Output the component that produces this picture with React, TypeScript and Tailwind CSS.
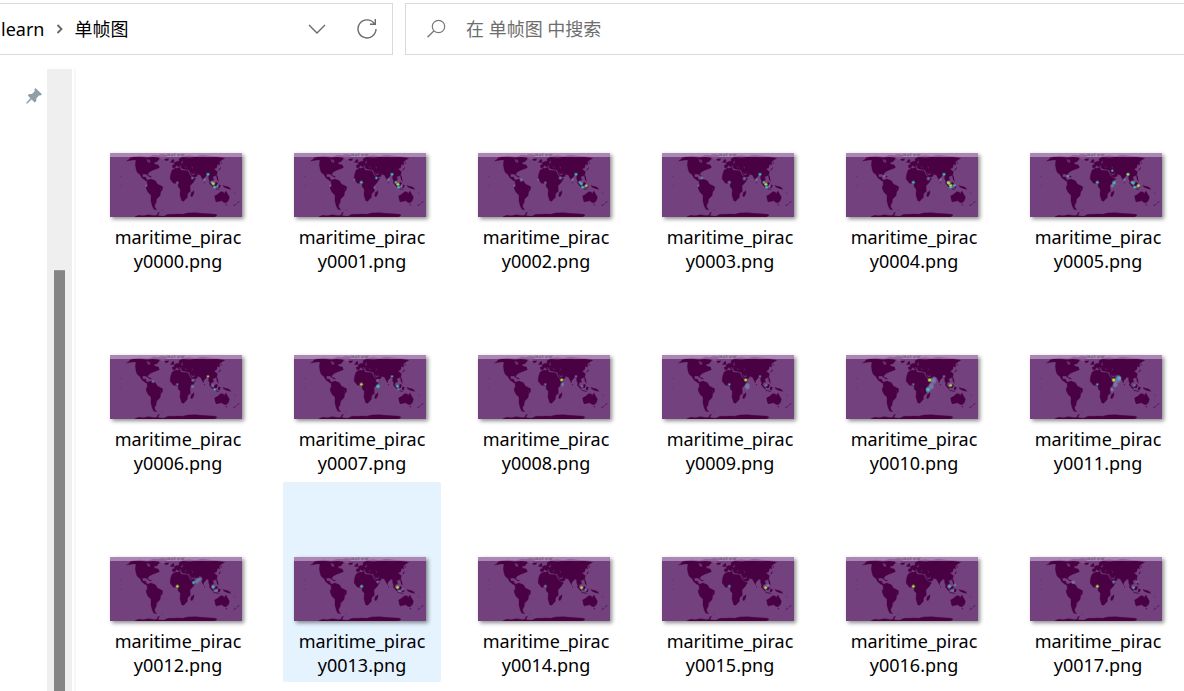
type Spot = [x: number, y: number, r: number, level: 0 | 1 | 2];

const SPOT_FILL = ["fill-[#6f92ba]", "fill-[#3fc0b0]", "fill-[#a8ec40]"] as const;

const asia: Spot[] = [
  [324, 88, 4, 1],
  [313, 104, 3, 0],
  [344, 127, 4, 1],
  [353, 123, 3, 0],
  [335, 112, 3, 1],
];

const frames: Spot[][] = [
  [...asia, [340, 116, 4, 2], [232, 113, 3, 0], [277, 99, 3, 0], [139, 122, 2, 0]],
  [...asia, [342, 118, 4, 2], [232, 112, 4, 1], [277, 99, 3, 1], [139, 122, 2, 0], [211, 104, 2, 0], [271, 128, 2, 0]],
  [...asia, [356, 122, 3, 2], [340, 116, 4, 1], [232, 113, 3, 0], [277, 99, 4, 0], [139, 122, 2, 0], [160, 105, 4, 0], [211, 104, 2, 0]],
  [...asia, [342, 118, 4, 2], [232, 112, 4, 0], [277, 101, 4, 0], [150, 98, 4, 0], [139, 122, 2, 0]],
  [...asia, [338, 114, 4, 2], [344, 121, 4, 2], [357, 121, 3, 1], [232, 112, 4, 1], [277, 101, 4, 0], [145, 93, 3, 0]],
  [...asia, [324, 88, 3, 2], [340, 114, 4, 1], [356, 122, 4, 2], [232, 112, 4, 1], [282, 113, 5, 1], [277, 77, 3, 1], [277, 122, 4, 0], [144, 93, 3, 1]],
  [[324, 88, 3, 2], [344, 128, 3, 1], [338, 116, 3, 0], [232, 112, 3, 0], [279, 100, 4, 0], [277, 118, 4, 0], [159, 104, 3, 0]],
  [[232, 112, 4, 2], [282, 118, 5, 1], [281, 101, 4, 0], [324, 88, 3, 1], [341, 118, 4, 1], [343, 128, 3, 0]],
  [[283, 112, 7, 0], [281, 99, 4, 2], [232, 112, 3, 0], [324, 88, 3, 0], [343, 118, 3, 0]],
  [[286, 118, 10, 0], [281, 99, 4, 2], [232, 112, 3, 1], [324, 88, 3, 0], [343, 115, 3, 0]],
  [[293, 100, 11, 0], [286, 118, 10, 0], [276, 128, 6, 1], [281, 99, 5, 2], [232, 112, 3, 0], [324, 88, 3, 0], [344, 115, 4, 2]],
  [[294, 95, 12, 0], [286, 112, 10, 0], [298, 93, 5, 1], [281, 99, 5, 2], [276, 128, 4, 0], [232, 112, 3, 1], [344, 115, 3, 0]],
  [[232, 112, 4, 2], [290, 95, 9, 0], [300, 90, 6, 0], [281, 101, 4, 1], [340, 114, 4, 1], [348, 124, 4, 0]],
  [[233, 112, 4, 1], [281, 99, 3, 0], [341, 115, 4, 2], [347, 126, 3, 0], [357, 121, 3, 0]],
  [[341, 116, 4, 2], [232, 112, 4, 0], [354, 122, 3, 0]],
  [[232, 112, 4, 0], [341, 116, 4, 2], [348, 110, 4, 0]],
  [[232, 112, 4, 2], [341, 112, 4, 1], [349, 124, 4, 0], [357, 108, 3, 0]],
  [[232, 112, 4, 2], [281, 99, 4, 0], [341, 116, 3, 1], [160, 100, 4, 0], [352, 98, 3, 0]],
];

function WorldMap({ spots }: { spots: Spot[] }) {
  return (
    <svg viewBox="30 24 396 192" className="block h-16 w-[132px]" aria-hidden="true">
      <rect x="30" y="24" width="396" height="192" className="fill-[#74417f]" />
      <g className="fill-[#490143] stroke-[#490143]" strokeWidth="1" strokeLinejoin="round">
        <path d="M90 39 100 36 121 35 139 38 160 36 178 39 176 45 168 52 162 50 164 58 175 60 178 68 166 73 158 76 149 80 143 87 145 92 137 87 127 87 129 97 137 96 138 101 145 107 138 108 126 99 118 86 114 80 117 87 111 81 108 71 106 58 108 45 98 45 80 48 88 43Z" />
        <path d="M146 104 153 102 166 107 172 117 188 125 187 135 182 141 180 152 170 162 168 174 164 180 165 189 171 194 162 193 157 184 153 169 153 151 144 142 138 128 142 119 141 109Z" />
        <path d="M216 76 225 70 240 69 244 76 264 77 270 90 279 100 287 100 280 112 270 123 271 139 263 146 262 157 251 169 245 167 240 150 241 133 235 126 234 116 220 115 210 102 211 90Z" />
        <path d="M282 137 281 147 276 155 272 153 274 143Z" />
        <path d="M218 68 217 61 224 58 222 53 229 50 238 48 237 41 248 36 270 38 296 34 320 37 350 36 374 40 365 45 358 51 359 60 352 58 350 68 342 72 352 80 350 91 338 95 341 105 334 107 332 115 326 101 326 92 321 90 311 101 310 108 304 96 301 90 292 88 291 94 278 98 270 84 268 76 255 73 247 72 241 61 237 61 242 69 235 65 230 61 225 68Z" />
        <path d="M215 46 221 43 222 51 217 54ZM211 51 215 49 214 54ZM194 43 206 41 204 46 197 47Z" />
        <path d="M344 153 354 147 362 140 370 141 372 146 378 138 383 148 388 156 386 166 378 174 370 171 365 167 349 171 346 165Z" />
        <path d="M104 216 115 211 130 212 145 209 164 212 173 209 173 204 178 201 174 212 191 214 204 208 219 208 233 207 248 208 263 204 287 203 304 205 325 206 347 208 351 211 344 216Z" />
      </g>
      <g className="fill-[#490143]">
        <path d="M327 109 341 123 340 128 328 115ZM341 117 349 111 354 115 349 124 342 122ZM341 129 357 132 356 134 341 131ZM355 119 362 120 359 130 354 128ZM368 121 387 126 394 134 382 131 378 130 371 126ZM348 89 353 94 356 110 351 104Z" />
        <path d="M376 178 382 178 379 182ZM414 167 418 171 412 175 410 174 415 171ZM411 176 402 183 399 182 407 177Z" opacity="0.8" />
        <path d="M142 91 150 92 156 96 150 97ZM353 77 358 71 362 65 361 73ZM363 49 366 57 362 54ZM313 111h2v4h-2z" />
        <path d="M394 127h4v2h-4zM403 141l5 4-2 1-5-4zM60 92l6 3-1 2-5-3zM62 119h3v3h-3zM40 144h2v2h-2zM135 120h2v2h-2zM184 195h5v2h-5zM295 188h3v2h-3z" opacity="0.35" />
      </g>
      <path
        d="M139 42 151 45 150 55 142 51ZM247 46 243 53 245 57 249 52ZM253 65 262 65 262 67 253 67ZM275 64 278 66 278 71 276 70ZM272 81 280 88 285 85 280 79 286 84 283 90 277 91Z"
        className="fill-[#74417f]"
        opacity="0.7"
      />
      <path d="M166 29 185 26 205 29 195 38 188 45 181 39Z" className="fill-[#815084]" />
      <path d="M262 75 280 99M211 86 210 104 220 116 233 116M302 94 310 110 322 94M180 128 185 142M336 104 341 124" className="fill-none stroke-[#8a62a0]" strokeWidth="1" opacity="0.4" />
      <rect x="30" y="24" width="396" height="12" className="fill-[#aa88b3]" />
      <path d="M88 36 120 32 145 35 160 29 176 31 184 27 204 30 198 36ZM240 36 266 31 286 34 306 29 342 34 374 36Z" className="fill-[#94689a]" />
      <path d="M202 26h9v7h-9zM213 28h6v6h-6zM221 25h5v8h-5zM232 27h7v7h-7zM242 26h11v7h-11z" className="fill-[#7f6585]" opacity="0.8" />
      {spots.map(([x, y, r, level], i) =>
        r > 6 ? (
          <g key={i} className="fill-[#7a8fc0]">
            <ellipse cx={x} cy={y} rx={r * 0.8} ry={r} opacity="0.4" />
            <ellipse cx={x} cy={y} rx={r * 0.5} ry={r * 0.7} opacity="0.5" />
          </g>
        ) : (
          <g key={i} className={SPOT_FILL[level]}>
            <circle cx={x} cy={y} r={r + 2} opacity="0.3" />
            <circle cx={x} cy={y} r={r * 0.9} opacity={level === 0 ? 0.65 : 0.95} />
          </g>
        ),
      )}
    </svg>
  );
}

function FileTile({ index, spots }: { index: number; spots: Spot[] }) {
  const selected = index === 13;
  return (
    <li>
      <button
        type="button"
        aria-pressed={selected}
        className={`flex h-[200px] w-full flex-col items-center rounded-xs pt-[75px] ${selected ? "bg-[#e5f3ff]" : "bg-white"}`}
      >
        <span className="mr-1 shadow-[2px_2px_4px_rgba(0,0,0,0.45)]">
          <WorldMap spots={spots} />
        </span>
        <span className="mt-2 w-[134px] text-center text-lg leading-6 break-all">
          {`maritime_piracy${String(index).padStart(4, "0")}.png`}
        </span>
      </button>
    </li>
  );
}

export default function App() {
  return (
    <div className="flex min-h-screen flex-col bg-white font-['Noto_Sans','Noto_Sans_CJK_SC',sans-serif] text-lg text-black">
      <header className="flex gap-3 pt-[3px]">
        <div className="flex h-13 w-[393px] shrink-0 items-center border-y border-r border-[#d9d9d9] pr-[13px]">
          <nav aria-label="路径" className="flex flex-1 items-center">
            <a href="#learn" className="pl-px">learn</a>
            <svg viewBox="0 0 8 10" className="mr-2.5 ml-3 h-2.5 w-2" aria-hidden="true">
              <path d="M1.5 1 5.5 5 1.5 9" className="fill-none stroke-[#666]" strokeWidth="1.8" />
            </svg>
            <a href="#frames">单帧图</a>
          </nav>
          <button type="button" aria-label="以前的位置" className="mr-6 flex size-7 items-center justify-center">
            <svg viewBox="0 0 18 10" className="h-2.5 w-[18px]">
              <path d="M1 1 9 9 17 1" className="fill-none stroke-[#6b6b6b]" strokeWidth="1.4" />
            </svg>
          </button>
          <button type="button" aria-label="刷新" className="flex size-6 items-center justify-center">
            <svg viewBox="0 0 20 20" className="size-5">
              <path d="M17.2 4.5A9 9 0 1 0 19 10M18.3 0V5.2H13" className="fill-none stroke-[#6b6b6b]" strokeWidth="1.4" />
            </svg>
          </button>
        </div>
        <label className="flex h-13 flex-1 items-center border-y border-l border-[#d9d9d9] pl-5">
          <svg viewBox="0 0 20 20" className="size-5 shrink-0" aria-hidden="true">
            <path d="M7.8 12 1.5 18.3" className="stroke-[#777]" strokeWidth="1.4" />
            <circle cx="12.5" cy="7.5" r="6.2" className="fill-none stroke-[#777]" strokeWidth="1.2" />
          </svg>
          <input
            type="text"
            aria-label="搜索"
            placeholder="在 单帧图 中搜索"
            className="ml-5 min-w-0 flex-1 outline-none placeholder:text-[#6d6d6d]"
          />
        </label>
      </header>

      <div className="flex flex-1 pt-3.5">
        <aside className="flex w-[47px] shrink-0 justify-end pt-[19px] pr-[5px]">
          <svg viewBox="0 0 16 16" className="size-4" aria-hidden="true">
            <path d="M9.4 0 16 6.3 14.4 7.6 13 7.5 10.4 10.2 10.2 13.2 8.7 14.4 5.6 11.4 1 15.8 0 15 4.4 10.2 1.8 7.5 3 6.1 6 6 8.7 3.2 8.4 1.4Z" className="fill-[#8f9ea7]" />
          </svg>
        </aside>
        <div className="flex w-[25px] shrink-0 flex-col items-center bg-[#efefef] pt-[201px]">
          <div className="w-[11px] flex-1 border-t border-[#999] bg-[#858585]" />
        </div>
        <div className="ml-0.5 w-0.5 shrink-0 bg-[#f7f7f7]" />
        <main className="flex-1 pt-[9px] pl-[23px]">
          <ul className="grid grid-cols-[repeat(auto-fill,158px)] gap-x-[26px] gap-y-0.5">
            {frames.map((spots, i) => (
              <FileTile key={i} index={i} spots={spots} />
            ))}
          </ul>
        </main>
      </div>
    </div>
  );
}
